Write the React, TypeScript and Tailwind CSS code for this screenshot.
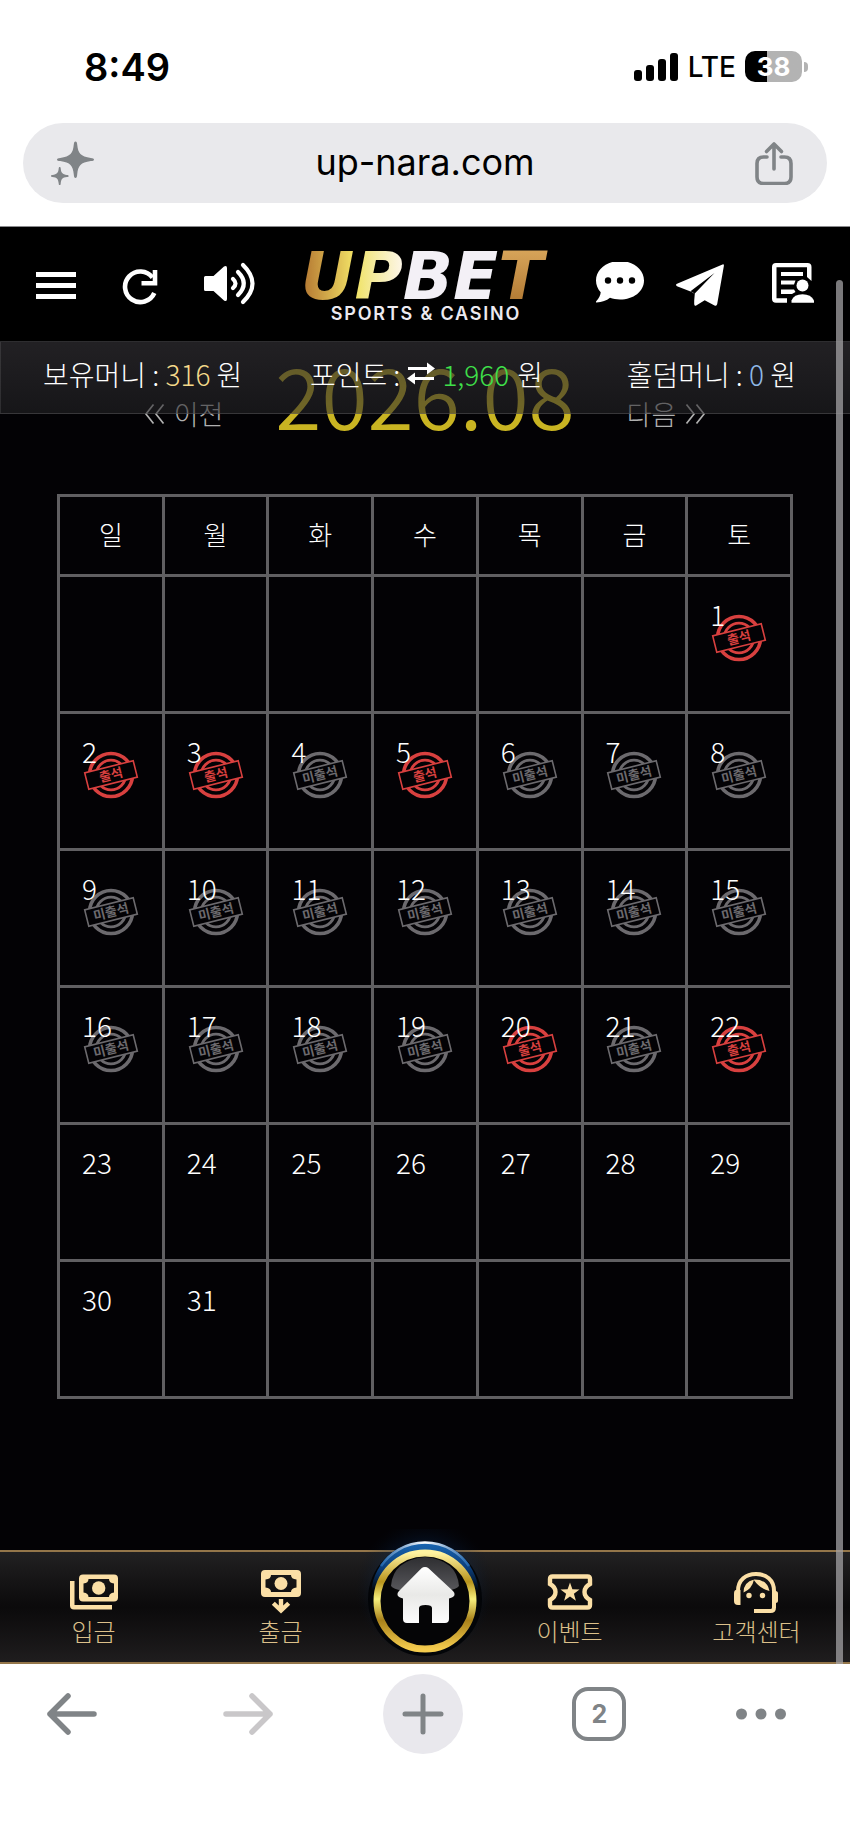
import React from "react";

const WEEKDAYS = ["일", "월", "화", "수", "목", "금", "토"];
const LEADING_BLANKS = 6;
const DAYS_IN_MONTH = 31;
const TODAY = 22;
const ATTENDED = [1, 2, 3, 5, 20, 22];

const CELLS: (number | null)[] = Array.from({ length: 42 }, (_, i) => {
  const day = i - LEADING_BLANKS + 1;
  return day >= 1 && day <= DAYS_IN_MONTH ? day : null;
});
const WEEKS = Array.from({ length: 6 }, (_, w) => CELLS.slice(w * 7, w * 7 + 7));

function StatusBar() {
  return (
    <div className="flex h-[123px] items-center justify-between pt-[10px] pr-[42px] pl-[84px] text-black">
      <span className="text-[38px] leading-none font-semibold">8:49</span>
      <div className="flex items-center gap-[9px]">
        <svg className="h-7 w-[46px]" viewBox="0 0 46 28" fill="currentColor" aria-hidden="true">
          <rect x="1" y="17" width="8" height="11" rx="3" />
          <rect x="13" y="12" width="8" height="16" rx="3" />
          <rect x="25" y="6" width="8" height="22" rx="3" />
          <rect x="37" y="0" width="8" height="28" rx="3" />
        </svg>
        <span className="text-[28px] leading-8 font-medium">LTE</span>
        <div className="flex items-center gap-[2px]">
          <span className="flex h-[31px] w-[57px] items-center justify-center rounded-[10px] bg-linear-to-r from-black from-38% to-[#b3b3b3] to-38% text-[26px] leading-none font-bold text-white">
            38
          </span>
          <span className="h-[10px] w-1 rounded-r-full bg-[#b3b3b3]" />
        </div>
      </div>
    </div>
  );
}

function AddressBar() {
  return (
    <div className="mx-[23px] mb-[23px] flex h-20 items-center justify-between rounded-full bg-[#e9e9ec] pr-[34px] pl-7 text-[#808487]">
      <button type="button" aria-label="AI">
        <svg className="h-11 w-11" viewBox="0 0 44 44" fill="currentColor">
          <path d="M24.500 0.500c1.200 0 1.500 1 1.700 3 .9 9 3.300 11.800 13.600 13.400 2 .3 3.200.4 3.200 1.600s-1.200 1.300-3.200 1.600c-10.300 1.600-12.700 4.400-13.600 13.400-.2 2-.5 3.500-1.700 3.500s-1.500-1.500-1.700-3.500c-.9-9-3.300-11.800-13.600-13.400-2-.3-3.200-.4-3.200-1.600s1.200-1.300 3.200-1.600c10.300-1.600 12.700-4.400 13.600-13.400.2-2 .5-3 1.700-3z" />
          <path d="M8.700 26c.8 0 .9.700 1 1.500.4 4.300 1.700 5.900 6.300 6.400 1 .1 1.700.4 1.700 1.100s-.7.900-1.700 1c-4.600.5-5.900 2.100-6.300 6.400-.1.900-.2 1.600-1 1.600s-.9-.7-1-1.600C7.300 38.100 6 36.500 1.400 36c-1-.1-1.700-.3-1.700-1s.7-1 1.700-1.100c4.600-.5 5.900-2.100 6.300-6.400.1-.8.200-1.500 1-1.500z" />
        </svg>
      </button>
      <input
        type="text"
        aria-label="주소"
        defaultValue="up-nara.com"
        className="min-w-0 flex-1 bg-transparent pb-[2px] text-center text-[36px] leading-none text-black outline-none"
      />
      <button type="button" aria-label="공유">
        <svg className="h-11 w-[38px]" viewBox="0 0 38 44" fill="none" stroke="currentColor" strokeWidth="3.600" strokeLinecap="round" strokeLinejoin="round">
          <path d="M12 16H8.500Q2 16 2 22.500V36q0 6.500 6.500 6.500h21q6.500 0 6.500-6.500V22.500Q36 16 29.500 16H26" />
          <path d="M19 28V3.500M11.500 10.500 19 3l7.500 7.500" />
        </svg>
      </button>
    </div>
  );
}

function SiteHeader() {
  return (
    <header className="flex h-[114px] items-center justify-between bg-black pr-9 pl-9 text-white">
      <div className="flex w-[220px] items-center justify-between">
        <button type="button" aria-label="메뉴">
          <svg className="h-11 w-10" viewBox="0 0 40 44" fill="currentColor">
            <path d="M0 10h40v5H0zM0 21h40v5H0zM0 32h40v5H0z" />
          </svg>
        </button>
        <button type="button" aria-label="새로고침">
          <svg className="h-11 w-9" viewBox="0 0 36 44" fill="none" stroke="currentColor" strokeWidth="4.600">
            <path d="M30.500 15.500A15.300 15.300 0 1 0 32.300 31" />
            <path d="M33 8v13.300H19.500" />
          </svg>
        </button>
        <button type="button" aria-label="소리">
          <svg className="h-11 w-[52px]" viewBox="0 0 52 44" fill="none" stroke="currentColor" strokeWidth="4.200" strokeLinecap="round">
            <path d="M1.500 14h8L20 4.500Q23 3 23 6v31q0 3-3 1.500L9.500 29h-8Q0 29 0 27.500v-12Q0 14 1.500 14z" fill="currentColor" stroke="none" />
            <path d="M29 17q5 4.500 0 9" />
            <path d="M34 10q11.500 11.500 0 23" />
            <path d="M39 3q19 18.500 0 37" />
          </svg>
        </button>
      </div>

      <a href="#" className="flex flex-col items-center pt-[6px]" aria-label="UPBET SPORTS & CASINO">
        <span className="font-['DejaVu_Sans',sans-serif] text-[66px] leading-[54px] font-bold whitespace-nowrap text-transparent italic">
          <span className="bg-linear-to-r from-[#b17430] to-[#f2e266] bg-clip-text">U</span>
          <span className="bg-linear-to-r from-[#f0e25c] to-[#fdf6e8] bg-clip-text">P</span>
          <span className="text-[#f3f0f6]">BE</span>
          <span className="bg-linear-to-b from-[#e0ae62] to-[#a8702a] bg-clip-text pr-2">T</span>
        </span>
        <span className="font-[Inter] text-[18px] leading-5 font-semibold tracking-widest text-[#eceaf0]">SPORTS &amp; CASINO</span>
      </a>

      <div className="flex items-center">
        <button type="button" aria-label="채팅">
          <svg className="h-11 w-12" viewBox="0 2 48 44">
            <path d="M24 1C37.500 1 48 9.500 48 20.500S37.500 39.500 24 39.500c-3.700 0-7-.6-10-1.700C10.500 40.500 6 42.500.5 42.500c-.6 0-.8-.7-.3-1.200C3 38 4.500 35.500 4.700 32.300 1.700 29 0 25 0 20.500 0 9.500 10.500 1 24 1z" fill="#fff" />
            <g fill="#000">
              <circle cx="12" cy="20.500" r="3.200" />
              <circle cx="24" cy="20.500" r="3.200" />
              <circle cx="36" cy="20.500" r="3.200" />
            </g>
          </svg>
        </button>
        <button type="button" aria-label="텔레그램" className="ml-8">
          <svg className="h-11 w-12" viewBox="0 0 48 44">
            <g transform="translate(0 1)">
              <path d="M46.500 1.500q1.500-.6 1.400 1.200L41.200 41q-.5 2.500-2.700 1.400l-9.800-5.200-8.500 5.300q-2 1-2-1.500V30.500l-3-1.800L1 23.200Q-1 22 1 20.800z" fill="#fff" />
              <path d="M38.500 10 14.500 28.300l3.700 2v7.500l.8-7.500z" fill="#000" />
            </g>
          </svg>
        </button>
        <button type="button" aria-label="내 정보" className="ml-12">
          <svg className="h-11 w-[42px]" viewBox="0 0 42 44" fill="#fff">
            <path d="M4 1h31.500q4 0 4 4v14l-4.500-4V5.300H4.500v31H15v4.500H4q-4 0-4-4V5q0-4 4-4z" />
            <path d="M9 10h22v4H9zM9 18.500h14.500l-1.500 4H9zM9 27.500h13l1.500 2.500-3.500 2H9z" />
            <circle cx="30.500" cy="23.500" r="6" />
            <path d="M19.500 40.800v-2.300q2.500-6.300 11-6.300t11.500 6.300v2.300z" />
          </svg>
        </button>
      </div>
    </header>
  );
}

function BalanceBar() {
  return (
    <div className="relative z-10 flex h-[73px] items-center justify-between border-y border-l border-white/10 bg-linear-to-b from-[#2f2d30]/70 to-[#272629]/55 pr-[54px] pb-[7px] pl-[42px] text-[28px] leading-9 font-light text-white">
      <p>
        보유머니 : <span className="text-[#f4d98a]">316</span> 원
      </p>
      <p className="flex items-center pr-4">
        포인트 :
        <button type="button" aria-label="포인트 전환" className="mx-[7px]">
          <svg className="h-7 w-7" viewBox="0 0 28 28" fill="none" stroke="currentColor" strokeWidth="3">
            <path d="M1 8.500h20M27 18.500H7" />
            <path d="M20 2.500 28 8.500l-8 6zM8 12.500l-8 6 8 6z" fill="currentColor" stroke="none" />
          </svg>
        </button>
        <span className="mr-2 text-[#3fe04a]">1,960</span> 원
      </p>
      <p>
        홀덤머니 : <span className="text-[#8fb8e6]">0</span> 원
      </p>
    </div>
  );
}

function Chevrons({ className }: { className?: string }) {
  return (
    <svg className={className} viewBox="0 0 22 22" fill="none" stroke="currentColor" strokeWidth="1.700" aria-hidden="true">
      <path d="M9.500 1.500 2 11l7.500 9.500M19.500 1.500 12 11l7.500 9.500" />
    </svg>
  );
}

function MonthSwitcher() {
  return (
    <div className="-mt-[62px] flex h-[84px] items-center justify-center gap-[52px]">
      <button type="button" className="flex items-center gap-2 pt-10 text-[27px] leading-9 font-light text-[#b0b0b0]">
        <Chevrons className="h-[22px] w-[22px]" />
        이전
      </button>
      <h1 className="text-[84px] leading-[84px] font-[350] text-[#c9b422]">2026.08</h1>
      <button type="button" className="flex items-center gap-2 pt-10 text-[27px] leading-9 font-light text-[#b0b0b0]">
        다음
        <Chevrons className="h-[22px] w-[22px] rotate-180" />
      </button>
    </div>
  );
}

function Stamp({ attended }: { attended: boolean }) {
  return (
    <svg
      viewBox="0 0 56 50"
      role="img"
      aria-label={attended ? "출석" : "미출석"}
      className={"absolute top-9 left-1/2 h-[50px] w-14 -translate-x-1/2 " + (attended ? "text-[#d8403f]" : "text-[#6c6a6e]")}
    >
      <circle cx="28" cy="25" r="21.500" fill="none" stroke="currentColor" strokeWidth="3.600" />
      <circle cx="28" cy="25" r="14.800" fill="none" stroke="currentColor" strokeWidth="2.800" />
      <g transform="rotate(-14 28 25)">
        <rect x="3" y="16.500" width="50" height="17" fill="#030205" stroke="currentColor" strokeWidth="1.600" />
        <text x="28" y="29.500" textAnchor="middle" fontSize="13" fontWeight="700" fill="currentColor">
          {attended ? "출석" : "미출석"}
        </text>
      </g>
    </svg>
  );
}

function Calendar() {
  return (
    <table className="w-full table-fixed border-separate border-spacing-0 border-r-[3px] border-b-[3px] border-[#605f62] text-[28px] leading-9 font-light text-white">
      <thead>
        <tr>
          {WEEKDAYS.map((d) => (
            <th key={d} scope="col" className="h-20 border-t-[3px] border-l-[3px] border-[#605f62] p-0 pb-1 text-[26px] font-light">
              {d}
            </th>
          ))}
        </tr>
      </thead>
      <tbody>
        {WEEKS.map((week, w) => (
          <tr key={w}>
            {week.map((day, i) => (
              <td key={i} className="relative h-[137px] border-t-[3px] border-l-[3px] border-[#605f62] p-0 pt-[19px] pl-[22px] align-top">
                {day !== null && day <= TODAY && <Stamp attended={ATTENDED.includes(day)} />}
                {day !== null && <span className="relative">{day}</span>}
              </td>
            ))}
          </tr>
        ))}
      </tbody>
    </table>
  );
}

function NavLink({ label, children }: { label: string; children: React.ReactNode }) {
  return (
    <a href="#" className="flex flex-1 flex-col items-center gap-[3px]">
      <svg className="h-11 w-12 text-[#fbdfa6]" viewBox="0 0 48 44" fill="currentColor" aria-hidden="true">
        {children}
      </svg>
      <span className="text-[24px] leading-7 font-light text-[#dcc08a]">{label}</span>
    </a>
  );
}

function HomeButton() {
  return (
    <a href="#" aria-label="홈" className="absolute -top-[23px] left-1/2 -translate-x-1/2">
      <svg className="h-[140px] w-[160px]" viewBox="0 0 160 140">
        <defs>
          <radialGradient id="glow">
            <stop offset="0.700" stopColor="#0b2c58" stopOpacity="0.800" />
            <stop offset="1" stopColor="#04101f" stopOpacity="0" />
          </radialGradient>
          <linearGradient id="gold" x1="0" y1="0" x2="0" y2="1">
            <stop offset="0" stopColor="#fff3a0" />
            <stop offset="0.300" stopColor="#b8941c" />
            <stop offset="0.480" stopColor="#f6ef7c" />
            <stop offset="0.700" stopColor="#a8811a" />
            <stop offset="1" stopColor="#f5cc4e" />
          </linearGradient>
          <linearGradient id="blue" x1="0" y1="0" x2="0" y2="1">
            <stop offset="0" stopColor="#1a68b4" />
            <stop offset="0.250" stopColor="#0a3c78" />
            <stop offset="0.450" stopColor="#030609" />
          </linearGradient>
          <linearGradient id="arc" x1="0" y1="0" x2="1" y2="0">
            <stop offset="0" stopColor="#1d63ab" />
            <stop offset="0.500" stopColor="#ffffff" />
            <stop offset="1" stopColor="#1d63ab" />
          </linearGradient>
          <linearGradient id="gloss" x1="0" y1="0" x2="0" y2="1">
            <stop offset="0" stopColor="#2e2e31" />
            <stop offset="1" stopColor="#59595d" />
          </linearGradient>
          <linearGradient id="house" x1="0" y1="0" x2="0" y2="1">
            <stop offset="0" stopColor="#ffffff" />
            <stop offset="0.500" stopColor="#e9e9e7" />
            <stop offset="1" stopColor="#fdfdfd" />
          </linearGradient>
        </defs>
        <circle cx="80" cy="60" r="70" fill="url(#glow)" opacity="0.300" />
        <circle cx="80" cy="70" r="57" fill="#030508" />
        <circle cx="80" cy="67" r="54" fill="url(#blue)" />
        <path d="M36 37A53 53 0 0 1 124 37" fill="none" stroke="url(#arc)" strokeWidth="2.500" />
        <circle cx="80" cy="72" r="48" fill="#050506" stroke="url(#gold)" strokeWidth="7" />
        <path d="M46 57q2-26 34-29 32 3 34 29-5 6-34 6t-34-6z" fill="url(#gloss)" />
        <path d="M80 38q2 0 3.500 1.300L108 62q2 2 1.500 4t-5.500 3.500V90q0 4-4 4H87V79q0-3-6.500-3T74 79v15H62q-4 0-4-4V69.500Q53 68 52.500 66T54 62l22.500-22.700Q78 38 80 38z" fill="url(#house)" />
      </svg>
    </a>
  );
}

function BottomNav() {
  return (
    <nav className="relative flex h-[114px] items-center border-y-2 border-[#94764a] bg-linear-to-b from-[#222122] via-[#0b0a0b] via-50% to-[#1f1d1e]">
      <NavLink label="입금">
        <path d="M0 11h4.500v24H42v4.500H4Q0 39.500 0 35.500z" />
        <path fillRule="evenodd" d="M13 4.500h31q4 0 4 4v19q0 4-4 4H13q-4 0-4-4v-19q0-4 4-4zM18.500 9q0 4-5 4.500v9q5 .5 5 4.500H39q0-4 5-4.500v-9Q39 13 39 9z" />
        <circle cx="28.700" cy="18" r="6.700" />
      </NavLink>
      <NavLink label="출금">
        <path fillRule="evenodd" d="M8 0h32q4 0 4 4v19q0 4-4 4H8q-4 0-4-4V4q0-4 4-4zM14 5q0 4-5.500 4.500v8Q14 18 14 22h20q0-4 5.500-4.500v-8Q34 9 34 5z" />
        <circle cx="24" cy="13.500" r="6.500" />
        <path d="M21.800 29h4.400v6.500l4-3.800 3 3L24 43.500l-9.200-8.800 3-3 4 3.800z" />
      </NavLink>
      <div className="w-[102px]" />
      <NavLink label="이벤트">
        <path
          d="M6.500 6.500h35q2.500 0 2.500 2.500v5q-5.500 3-5.500 8t5.500 8v5q0 2.500-2.500 2.500h-35Q4 37.500 4 35v-5q5.500-3 5.500-8T4 14V9q0-2.500 2.500-2.500z"
          fill="none"
          stroke="currentColor"
          strokeWidth="4.400"
        />
        <path d="m24 12.500 2.400 6.700 7.100.2-5.600 4.400 2 6.900-5.900-4.100-5.900 4.100 2-6.900-5.600-4.400 7.100-.2z" />
      </NavLink>
      <NavLink label="고객센터">
        <path d="M5 21C5 9.500 13 4 23 4s18 5.500 18 17v16.500q0 3.500-3.500 3.500H21" fill="none" stroke="currentColor" strokeWidth="4" />
        <path d="M3 20h4.500v15H5q-4 0-4-4v-7q0-4 2-4z" />
        <rect x="40" y="21" width="5" height="12" rx="2.500" />
        <path d="M10.500 22.500Q10.500 12 21 9.500q-2 9.500-10.500 13zM20.500 9.500Q34 9 36.500 21 27 19 20.500 9.500z" />
        <circle cx="16" cy="25.500" r="2.700" />
        <circle cx="29.500" cy="25.500" r="2.700" />
      </NavLink>
      <HomeButton />
    </nav>
  );
}

function BrowserToolbar() {
  return (
    <div className="flex h-[177px] items-start justify-between bg-white pt-[10px] pr-16 pl-[47px] text-[#808487]">
      <button type="button" aria-label="뒤로" className="flex h-20 items-center">
        <svg className="h-11 w-[50px]" viewBox="0 0 50 44" fill="none" stroke="currentColor" strokeWidth="5.500" strokeLinecap="round" strokeLinejoin="round">
          <path d="M47 22H3M21 4 3 22l18 18" />
        </svg>
      </button>
      <button type="button" aria-label="앞으로" className="ml-4 flex h-20 items-center text-[#c9c7c9]">
        <svg className="h-11 w-[50px]" viewBox="0 0 50 44" fill="none" stroke="currentColor" strokeWidth="5.500" strokeLinecap="round" strokeLinejoin="round">
          <path d="M3 22h44M29 4l18 18-18 18" />
        </svg>
      </button>
      <button type="button" aria-label="새 탭" className="flex h-20 w-20 items-center justify-center rounded-full bg-[#e9e8ed]">
        <svg className="h-[42px] w-[42px]" viewBox="0 0 42 42" fill="none" stroke="currentColor" strokeWidth="5" strokeLinecap="round">
          <path d="M21 3v36M3 21h36" />
        </svg>
      </button>
      <button type="button" aria-label="탭 2개" className="flex h-20 items-center">
        <span className="flex h-[54px] w-[54px] items-center justify-center rounded-2xl border-4 border-current text-[25px] leading-none font-bold">
          2
        </span>
      </button>
      <button type="button" aria-label="더보기" className="flex h-20 items-center">
        <svg className="h-3 w-[50px]" viewBox="0 0 50 12" fill="currentColor">
          <circle cx="5.500" cy="6" r="5.500" />
          <circle cx="25" cy="6" r="5.500" />
          <circle cx="44.500" cy="6" r="5.500" />
        </svg>
      </button>
    </div>
  );
}

export default function App() {
  return (
    <div className="flex min-h-screen flex-col bg-white font-[Inter,'Noto_Sans_CJK_KR',sans-serif]">
      <StatusBar />
      <AddressBar />
      <div className="relative flex flex-1 flex-col border-t border-[#8a8a8d] bg-[#030205] font-['Noto_Sans_CJK_KR',sans-serif]">
        <SiteHeader />
        <BalanceBar />
        <main className="flex-1 px-[57px]">
          <MonthSwitcher />
          <div className="mt-[58px]">
            <Calendar />
          </div>
        </main>
        <BottomNav />
        <div className="absolute top-[53px] right-[7px] bottom-0 z-20 w-[7px] rounded-t-full bg-[#a3a1a4]/75" />
      </div>
      <BrowserToolbar />
    </div>
  );
}
